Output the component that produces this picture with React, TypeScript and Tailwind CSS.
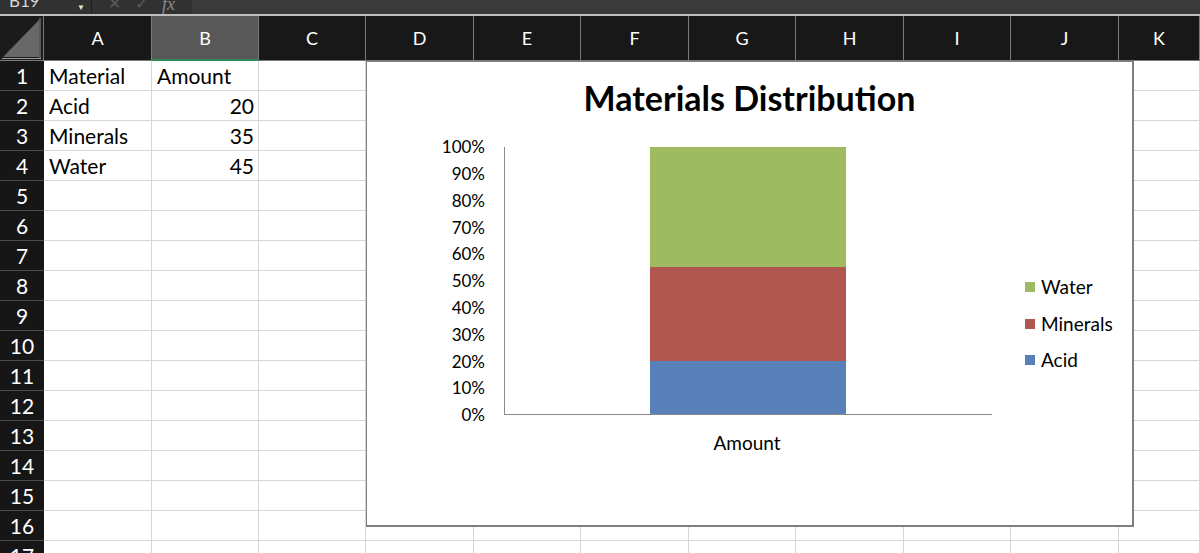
import React from "react";

const COLS = ["A", "B", "C", "D", "E", "F", "G", "H", "I", "J", "K"];

const DATA: Record<number, [string, string]> = {
  1: ["Material", "Amount"],
  2: ["Acid", "20"],
  3: ["Minerals", "35"],
  4: ["Water", "45"],
};

const PCTS = ["100%", "90%", "80%", "70%", "60%", "50%", "40%", "30%", "20%", "10%", "0%"];

const GRID =
  "grid grid-cols-[44px_108px_107px_107px_108px_107px_108px_107px_108px_107px_108px_1fr]";

function TopBar() {
  return (
    <div className="h-[14px] bg-[#313131] flex items-start overflow-hidden text-[#d8d8d8]">
      <div className="w-[92px] h-full flex items-start justify-between pl-[9px] pr-[6px] border-r border-[#1f1f1f]">
        <span className="text-[17px] leading-[17px] -mt-[8px]">B19</span>
        <span className="text-[8px] leading-[8px] mt-[3px] text-[#e6e6e6]">▼</span>
      </div>
      <div className="w-[100px] h-full flex items-start gap-[14px] pl-[16px] text-[#5a5a5a]">
        <span className="text-[16px] leading-[16px] -mt-[5px]">✕</span>
        <span className="text-[16px] leading-[16px] -mt-[5px]">✓</span>
        <span className="text-[18px] leading-[18px] -mt-[5px] italic text-[#8a8a8a] font-['Liberation_Serif',serif]">
          fx
        </span>
      </div>
      <div className="flex-1 h-full bg-[#3a3a3a]" />
    </div>
  );
}

function Corner() {
  return (
    <div className="h-full border-r border-b border-[#7a7a7a] bg-[#1b1b1b]">
      <svg width="43" height="44" viewBox="0 0 43 44">
        <polygon points="3,41 39,4 39,41" fill="#686868" />
        <line x1="40" y1="2" x2="40" y2="42" stroke="#9a9a9a" strokeWidth="1" />
        <line x1="2" y1="42.5" x2="41" y2="42.5" stroke="#9a9a9a" strokeWidth="1" />
      </svg>
    </div>
  );
}

function Header() {
  return (
    <div className={`${GRID} h-[45px] bg-[#181818]`}>
      <Corner />
      {COLS.map((c) => (
        <div
          key={c}
          className={`flex items-center justify-center text-[18px] leading-none text-white border-r border-b border-[#7a7a7a] ${
            c === "B" ? "bg-[#585858] border-b-2 border-b-[#2e8b57]" : ""
          }`}
        >
          {c}
        </div>
      ))}
    </div>
  );
}

function Row({ n }: { n: number }) {
  const d = DATA[n];
  return (
    <div className={`${GRID} h-[30px] overflow-hidden`}>
      <div className="bg-[#161616] text-white text-[21px] leading-none flex items-center justify-center border-b border-[#4a4a4a]">
        {n}
      </div>
      {COLS.map((c) => {
        const isNum = d && c === "B" && /^\d+$/.test(d[1]);
        return (
          <div
            key={c}
            className={`bg-white border-r border-b border-[#d6d6d6] flex items-center text-[21px] leading-none text-black ${
              isNum ? "justify-end pr-[4px]" : "pl-[5px]"
            }`}
          >
            {d && c === "A" ? d[0] : null}
            {d && c === "B" ? d[1] : null}
          </div>
        );
      })}
    </div>
  );
}

function Chart() {
  return (
    <div className="absolute left-[366px] top-0 w-[768px] h-[466px] bg-white border border-[#7f7f7f] border-r-2 border-b-2 flex flex-col text-black">
      <div className="h-[85px] pt-[16px] text-center text-[34px] leading-[40px] font-bold">
        Materials Distribution
      </div>

      <div className="flex h-[268px]">
        {/* axis labels */}
        <div className="w-[137px] pr-[19px] h-full flex flex-col justify-between items-end text-[17px]">
          {PCTS.map((p) => (
            <div key={p} className="h-0 flex items-center">
              {p}
            </div>
          ))}
        </div>

        {/* plot area */}
        <div className="w-[488px] h-full border-l border-b border-[#8a8a8a]">
          <div className="ml-[145px] w-[196px] h-full flex flex-col">
            <div className="flex-[45] bg-[#9fbb62]" />
            <div className="flex-[35] bg-[#b1574f]" />
            <div className="flex-[20] bg-[#5a80b9]" />
          </div>
        </div>

        {/* legend */}
        <div className="ml-[33px] mt-[122px] flex flex-col text-[19px]">
          {[
            ["Water", "bg-[#9fbb62]"],
            ["Minerals", "bg-[#b1574f]"],
            ["Acid", "bg-[#5a80b9]"],
          ].map(([label, color]) => (
            <div key={label} className="h-[36.5px] flex items-center gap-[6px]">
              <span className={`w-[10px] h-[10px] ${color}`} />
              <span>{label}</span>
            </div>
          ))}
        </div>
      </div>

      <div className="ml-[282px] w-[196px] mt-[14px] text-center text-[19px]">Amount</div>
    </div>
  );
}

export default function App() {
  return (
    <div className="w-[1200px] h-[553px] overflow-hidden bg-[#181818] font-['Lato',sans-serif]">
      <TopBar />
      <div className="h-[2px] bg-[#bdbdbd]" />
      <Header />
      <div className="relative">
        {Array.from({ length: 17 }, (_, i) => (
          <Row key={i} n={i + 1} />
        ))}
        <Chart />
      </div>
    </div>
  );
}
